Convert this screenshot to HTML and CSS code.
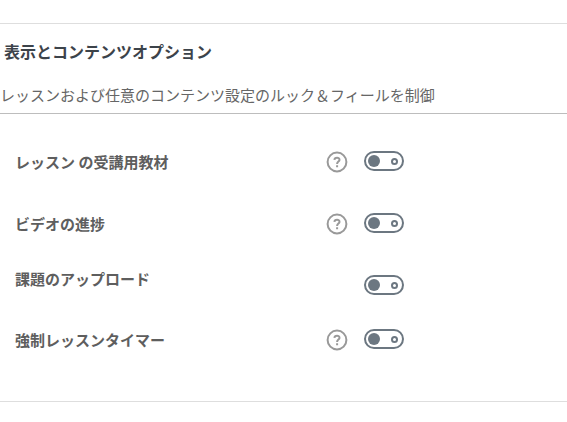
FILE: index.html
```html
<!DOCTYPE html>
<html lang="ja">
<head>
<meta charset="utf-8">
<title>表示とコンテンツオプション</title>
<link rel="stylesheet" href="styles.css">
</head>
<body>
<section class="panel">
  <header class="panel-header">
    <h2>表示とコンテンツオプション</h2>
    <p>レッスンおよび任意のコンテンツ設定のルック＆フィールを制御</p>
  </header>
  <div class="options">
    <div class="row">
      <label for="materials">レッスン の受講用教材</label>
      <button class="help" type="button" aria-label="ヘルプ"><svg viewBox="0 0 22 22"><circle cx="11" cy="11" r="9.4"/><path d="M8.4 8.9C8.6 6.1 13.6 6.1 13.5 8.9C13.4 10.6 11.1 10.7 11.1 12.9M11.1 14.2V16.2"/></svg></button>
      <input class="switch" type="checkbox" role="switch" id="materials">
    </div>
    <div class="row">
      <label for="video">ビデオの進捗</label>
      <button class="help" type="button" aria-label="ヘルプ"><svg viewBox="0 0 22 22"><circle cx="11" cy="11" r="9.4"/><path d="M8.4 8.9C8.6 6.1 13.6 6.1 13.5 8.9C13.4 10.6 11.1 10.7 11.1 12.9M11.1 14.2V16.2"/></svg></button>
      <input class="switch" type="checkbox" role="switch" id="video">
    </div>
    <div class="row row-plain">
      <label for="upload">課題のアップロード</label>
      <input class="switch" type="checkbox" role="switch" id="upload">
    </div>
    <div class="row">
      <label for="timer">強制レッスンタイマー</label>
      <button class="help" type="button" aria-label="ヘルプ"><svg viewBox="0 0 22 22"><circle cx="11" cy="11" r="9.4"/><path d="M8.4 8.9C8.6 6.1 13.6 6.1 13.5 8.9C13.4 10.6 11.1 10.7 11.1 12.9M11.1 14.2V16.2"/></svg></button>
      <input class="switch" type="checkbox" role="switch" id="timer">
    </div>
  </div>
</section>
</body>
</html>
```
FILE: styles.css
```css
*,
*::before,
*::after {
  box-sizing: border-box;
}

body {
  margin: 0;
  background: #fff;
  color: #5e5e5e;
  font-family: "Noto Sans CJK JP", sans-serif;
  font-size: 15px;
  line-height: 24px;
}

.panel {
  margin-top: 23px;
  border-top: 1px solid #dedede;
  border-bottom: 1px solid #dedede;
}

.panel-header {
  padding-top: 15px;
  border-bottom: 1px solid #bdbdbd;
}

h2 {
  margin: 0;
  padding-left: 4px;
  color: #3c434a;
  font-size: 16px;
  font-weight: 700;
}

.panel-header p {
  margin: 0;
  padding: 20px 0 6px;
  color: #666;
  font-weight: 400;
  white-space: nowrap;
}

.options {
  padding: 17px 0 30px;
}

.row {
  display: grid;
  grid-template-columns: 311px 22px 40px;
  column-gap: 0;
  align-items: center;
  height: 62px;
  padding-left: 15px;
}

.row label {
  font-weight: 700;
}

.help {
  width: 22px;
  height: 22px;
  padding: 0;
  border: 0;
  background: none;
}

.help svg {
  display: block;
  width: 22px;
  height: 22px;
  fill: none;
  stroke: #999;
  stroke-width: 2;
}

.switch {
  grid-column: 3;
  display: flex;
  align-items: center;
  justify-content: space-between;
  appearance: none;
  width: 40px;
  height: 20px;
  margin: 0 0 2px 16px;
  padding: 0 4px 0 2px;
  border: 2px solid #6c7781;
  border-radius: 10px;
}

.switch::before {
  content: "";
  width: 12px;
  height: 12px;
  border-radius: 50%;
  background: #6c7781;
}

.switch::after {
  content: "";
  width: 7px;
  height: 7px;
  border: 2px solid #6c7781;
  border-radius: 50%;
}

.switch:checked {
  flex-direction: row-reverse;
}

.row-plain {
  align-items: start;
  height: 54px;
  padding-top: 12px;
}

.row-plain .switch {
  margin-top: 8px;
}
```
